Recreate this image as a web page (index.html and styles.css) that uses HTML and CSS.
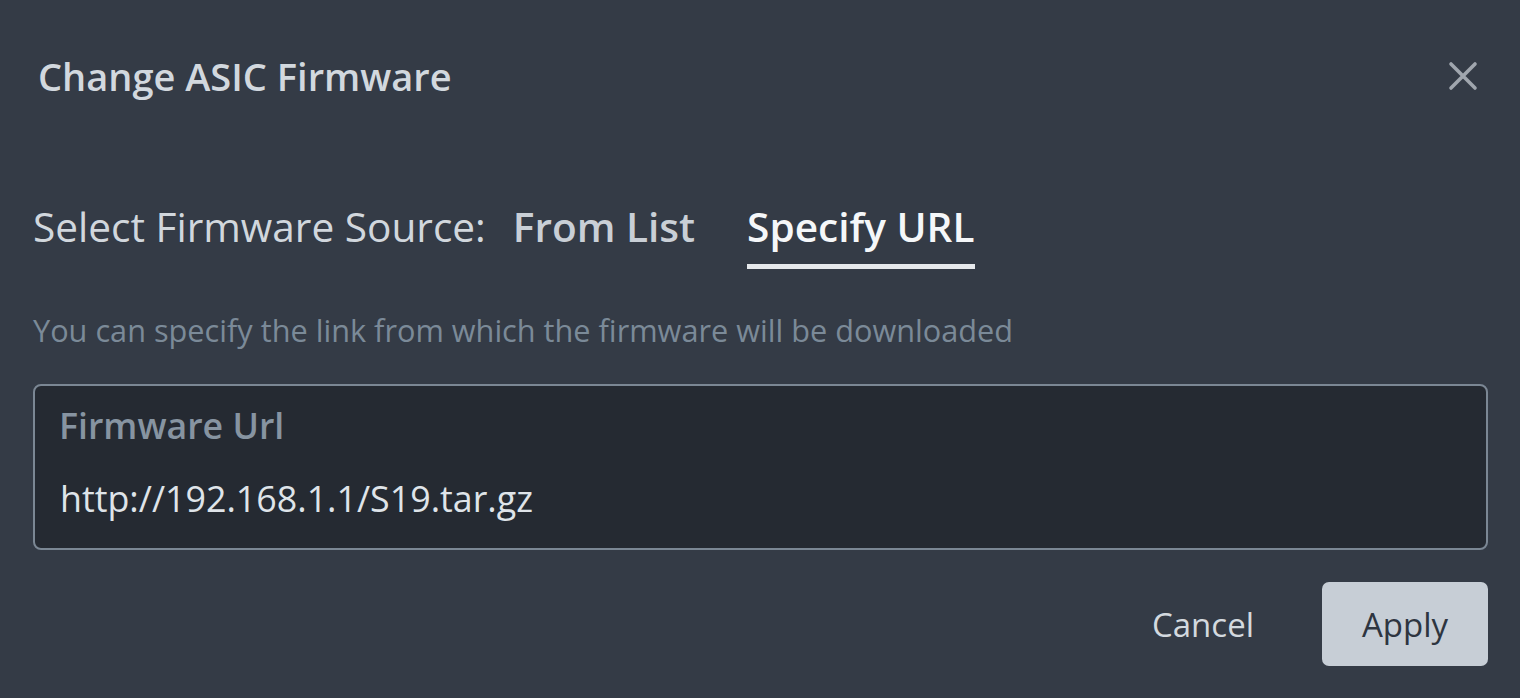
FILE: index.html
```html
<!DOCTYPE html>
<html lang="en">
<head>
  <meta charset="UTF-8">
  <title>Change ASIC Firmware</title>
  <link rel="stylesheet" href="styles.css">
</head>
<body>

  <!-- Dialog -->
  <div class="dialog">
    <header class="dialog-header">
      <h1>Change ASIC Firmware</h1>
      <button class="close-btn" aria-label="Close">
        <svg width="30" height="30" viewBox="0 0 30 30">
          <path d="M3 3 L27 27 M27 3 L3 27" stroke="#a0a6ae" stroke-width="3.6" stroke-linecap="round"/>
        </svg>
      </button>
    </header>

    <div class="source-row">
      <span class="source-label">Select Firmware Source:</span>
      <span class="tab">From List</span>
      <span class="tab active">Specify URL</span>
    </div>

    <p class="hint">You can specify the link from which the firmware will be downloaded</p>

    <div class="field">
      <label for="url">Firmware Url</label>
      <input type="text" id="url" value="http://192.168.1.1/S19.tar.gz">
    </div>

    <div class="actions">
      <button class="btn-cancel">Cancel</button>
      <button class="btn-apply">Apply</button>
    </div>
  </div>

</body>
</html>
```

FILE: styles.css
```css
/* Global */
body {
  margin: 0;
  background: #343b46;
  font-family: 'Open Sans', sans-serif;
  color: #d3d9df;
}

.dialog {
  padding: 0 32px 0 33px;
}

/* Header */
.dialog-header {
  display: flex;
  justify-content: space-between;
  align-items: center;
  height: 152px;
  padding-left: 5px;
}

.dialog-header h1 {
  margin: 0;
  font-size: 38px;
  font-weight: 600;
  color: #d2d8de;
}

.close-btn {
  background: none;
  border: none;
  padding: 0;
  margin-right: 10px;
  cursor: pointer;
  display: flex;
}

/* Source tabs */
.source-row {
  display: flex;
  align-items: baseline;
  gap: 52px;
  margin-top: 47px;
  font-size: 40.6px;
  line-height: normal;
}

.source-label {
  color: #d1d7dd;
  margin-right: -25px;
}

.tab {
  font-weight: 600;
  color: #c9cfd6;
  padding-bottom: 10px;
  border-bottom: 5px solid transparent;
}

.tab.active {
  color: #f5f7f9;
  border-bottom-color: #e6e9ec;
}

.hint {
  margin: 40px 0 0;
  font-size: 30.7px;
  line-height: normal;
  color: #7b8a98;
}

/* Input field */
.field {
  margin-top: 33px;
  border: 2px solid #7b8794;
  border-radius: 8px;
  background: #252a32;
  padding: 15px 25px 26px 24px;
  display: flex;
  flex-direction: column;
}

.field label {
  font-size: 35.7px;
  font-weight: 600;
  line-height: normal;
  color: #8794a1;
}

.field input {
  margin-top: 25px;
  margin-left: 1px;
  background: transparent;
  border: none;
  outline: none;
  padding: 0;
  font-family: 'Open Sans', sans-serif;
  font-size: 35.8px;
  line-height: normal;
  color: #dfe4e9;
}

/* Actions */
.actions {
  display: flex;
  justify-content: flex-end;
  align-items: center;
  gap: 68px;
  margin-top: 32px;
}

.actions button {
  font-family: 'Open Sans', sans-serif;
  font-size: 33px;
  border: none;
  cursor: pointer;
}

.btn-cancel {
  background: none;
  color: #d3d9df;
  padding: 0;
}

.btn-apply {
  width: 166px;
  height: 84px;
  border-radius: 7px;
  background: #c7ced6;
  color: #2e3540;
  font-weight: 500;
}
```
